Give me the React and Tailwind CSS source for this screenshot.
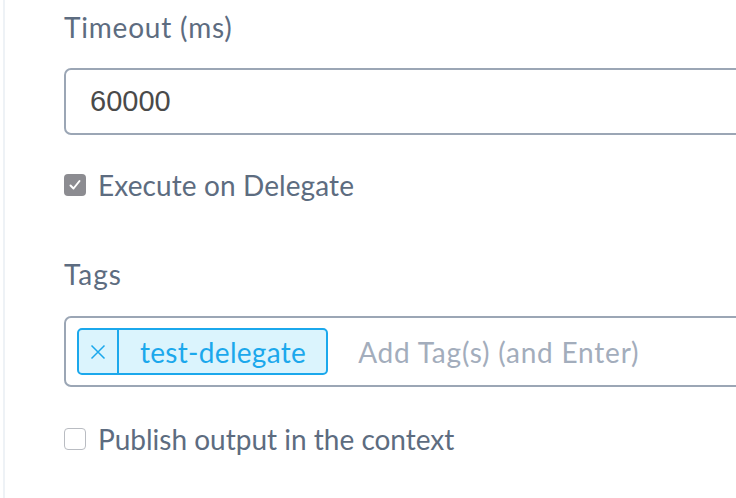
import React, { useState } from 'react';

function Checkbox({ checked, onChange }) {
    return (
        <button
            type="button"
            onClick={onChange}
            className={
                checked
                    ? 'w-[22px] h-[22px] rounded-[4px] bg-[#8c8c91] flex items-center justify-center shrink-0'
                    : 'w-[22px] h-[22px] rounded-[4px] border border-[#b9bcc2] bg-white shrink-0'
            }
        >
            {checked && (
                <svg width="14" height="14" viewBox="0 0 14 14" fill="none">
                    <path d="M2.5 7.5 L5.5 10.5 L11.5 3" stroke="white" strokeWidth="2" strokeLinecap="round" strokeLinejoin="round" />
                </svg>
            )}
        </button>
    );
}

export default function App() {
    const [timeout, setTimeoutValue] = useState('60000');
    const [onDelegate, setOnDelegate] = useState(true);
    const [publish, setPublish] = useState(false);
    const [tags, setTags] = useState(['test-delegate']);

    return (
        <div className="w-[736px] h-[498px] overflow-hidden bg-white font-['Lato',sans-serif]">
            <div className="ml-[3px] h-full border-l-2 border-[#eef2f6] pl-[59px] pt-[12px]">
                {/* timeout */}
                <div className="h-[30px] flex items-center text-[28px] text-[#5d6c80] tracking-[0.8px]">Timeout (ms)</div>
                <div className="mt-[26px] w-[720px] h-[67px] border-2 border-[#9ba6b5] rounded-[7px] flex items-center pl-[24px]">
                    <input
                        value={timeout}
                        onChange={(e) => setTimeoutValue(e.target.value)}
                        className="w-full font-['Liberation_Sans',sans-serif] text-[29px] text-[#4a4a4a] outline-none bg-transparent"
                    />
                </div>

                <label className="mt-[35px] h-[30px] flex items-center gap-[12px] text-[28px] text-[#5d6c80] tracking-[0.1px]">
                    <Checkbox checked={onDelegate} onChange={() => setOnDelegate(!onDelegate)} />
                    <span>Execute on Delegate</span>
                </label>

                {/* tags */}
                <div className="mt-[59px] h-[30px] flex items-center text-[28px] text-[#5d6c80] tracking-[1px]">Tags</div>
                <div className="mt-[27px] w-[720px] h-[71px] border-2 border-[#9ba6b5] rounded-[7px] flex items-center pl-[11px]">
                    {tags.map((tag) => (
                        <div key={tag} className="h-[47px] flex items-stretch border-2 border-[#1ba8ec] bg-[#dbf4fd] rounded-[5px] text-[#1ba8ec]">
                            <button
                                type="button"
                                onClick={() => setTags(tags.filter((t) => t !== tag))}
                                className="w-[40px] flex items-center justify-center border-r-2 border-[#1ba8ec]"
                            >
                                <svg width="16" height="16" viewBox="0 0 16 16" fill="none">
                                    <path d="M1.5 1.5 L14.5 14.5 M14.5 1.5 L1.5 14.5" stroke="#1ba8ec" strokeWidth="1.5" />
                                </svg>
                            </button>
                            <span className="pl-[21px] pr-[20px] flex items-center text-[28px] tracking-[0.3px]">{tag}</span>
                        </div>
                    ))}
                    <input
                        placeholder="Add Tag(s) (and Enter)"
                        className="ml-[30px] flex-1 min-w-0 text-[28px] tracking-[0.8px] text-[#4a4a4a] placeholder:text-[#a3adbc] outline-none bg-transparent"
                    />
                </div>

                <label className="mt-[37px] h-[30px] flex items-center gap-[12px] text-[28px] text-[#5d6c80]">
                    <Checkbox checked={publish} onChange={() => setPublish(!publish)} />
                    <span>Publish output in the context</span>
                </label>
            </div>
        </div>
    );
}
